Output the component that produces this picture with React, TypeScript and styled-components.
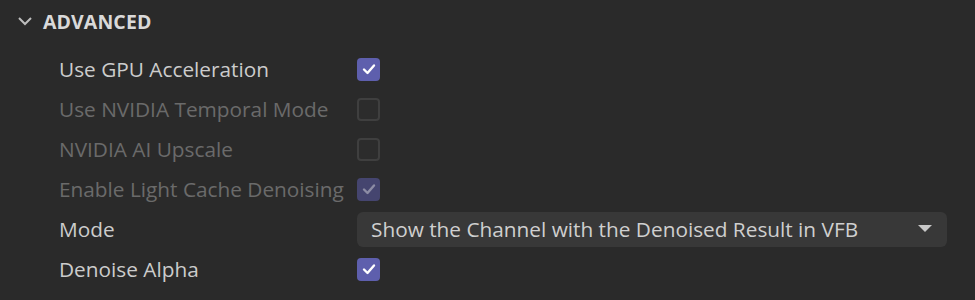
import React from "react";
import styled, { createGlobalStyle } from "styled-components";

const Global = createGlobalStyle`
  html, body { margin: 0; padding: 0; background: #2a2a2a; }
  body { font-family: "Open Sans", "Noto Sans", sans-serif; }
`;

const Panel = styled.div`
  width: 975px;
  height: 300px;
  background: #2a2a2a;
  box-sizing: border-box;
  padding: 0 28px 0 0;
  display: flex;
  flex-direction: column;
`;

const Header = styled.div`
  height: 42px;
  display: flex;
  align-items: center;
  padding-left: 17px;
  gap: 10px;
`;

const HeaderTitle = styled.span`
  color: #d9d9d9;
  font-weight: 700;
  font-size: 19.5px;
  letter-spacing: 0.1px;
`;

const Rows = styled.div`
  display: flex;
  flex-direction: column;
  padding-left: 59px;
  padding-top: 7px;
`;

const Row = styled.div`
  height: 40px;
  display: grid;
  grid-template-columns: 298px 1fr;
  align-items: center;
`;

const Label = styled.span<{ $disabled?: boolean }>`
  color: ${(p) => (p.$disabled ? "#6a6a6a" : "#cccccc")};
  font-size: 20.8px;
  white-space: nowrap;
`;

const Box = styled.span<{ $checked?: boolean; $disabled?: boolean }>`
  width: 23px;
  height: 23px;
  box-sizing: border-box;
  border-radius: 4px;
  display: flex;
  align-items: center;
  justify-content: center;
  background: ${(p) =>
    p.$checked ? (p.$disabled ? "#45456f" : "#5e5fad") : "#2c2c2c"};
  border: ${(p) => (p.$checked ? "none" : "2px solid #3f3f3f")};
`;

const Select = styled.div`
  height: 35px;
  border-radius: 6px;
  background: #383838;
  display: flex;
  align-items: center;
  justify-content: space-between;
  padding: 0 15px 0 14px;
  color: #cfcfcf;
  font-size: 20.8px;
  white-space: nowrap;
`;

const Chevron = () => (
  <svg width="16" height="10" viewBox="0 0 16 10">
    <path d="M2 2 L8 8 L14 2" fill="none" stroke="#bdbdbd" strokeWidth="2" />
  </svg>
);

const Caret = () => (
  <svg width="14" height="8" viewBox="0 0 14 8">
    <path d="M0 0 H14 L7 7 Z" fill="#c8c8c8" />
  </svg>
);

const Check = ({ color }: { color: string }) => (
  <svg width="14" height="12" viewBox="0 0 14 12">
    <path
      d="M2 6.5 L5.5 10 L12 2.5"
      fill="none"
      stroke={color}
      strokeWidth="2.4"
      strokeLinecap="round"
      strokeLinejoin="round"
    />
  </svg>
);

const CheckBox = ({ checked, disabled }: { checked?: boolean; disabled?: boolean }) => (
  <Box $checked={checked} $disabled={disabled}>
    {checked && <Check color={disabled ? "#8c8ca4" : "#ffffff"} />}
  </Box>
);

export default function App() {
  return (
    <>
      <Global />
      <Panel>
        <Header>
          <Chevron />
          <HeaderTitle>ADVANCED</HeaderTitle>
        </Header>
        <Rows>
          <Row>
            <Label>Use GPU Acceleration</Label>
            <CheckBox checked />
          </Row>
          <Row>
            <Label $disabled>Use NVIDIA Temporal Mode</Label>
            <CheckBox disabled />
          </Row>
          <Row>
            <Label $disabled>NVIDIA AI Upscale</Label>
            <CheckBox disabled />
          </Row>
          <Row>
            <Label $disabled>Enable Light Cache Denoising</Label>
            <CheckBox checked disabled />
          </Row>
          <Row>
            <Label>Mode</Label>
            <Select>
              <span>Show the Channel with the Denoised Result in VFB</span>
              <Caret />
            </Select>
          </Row>
          <Row>
            <Label>Denoise Alpha</Label>
            <CheckBox checked />
          </Row>
        </Rows>
      </Panel>
    </>
  );
}
